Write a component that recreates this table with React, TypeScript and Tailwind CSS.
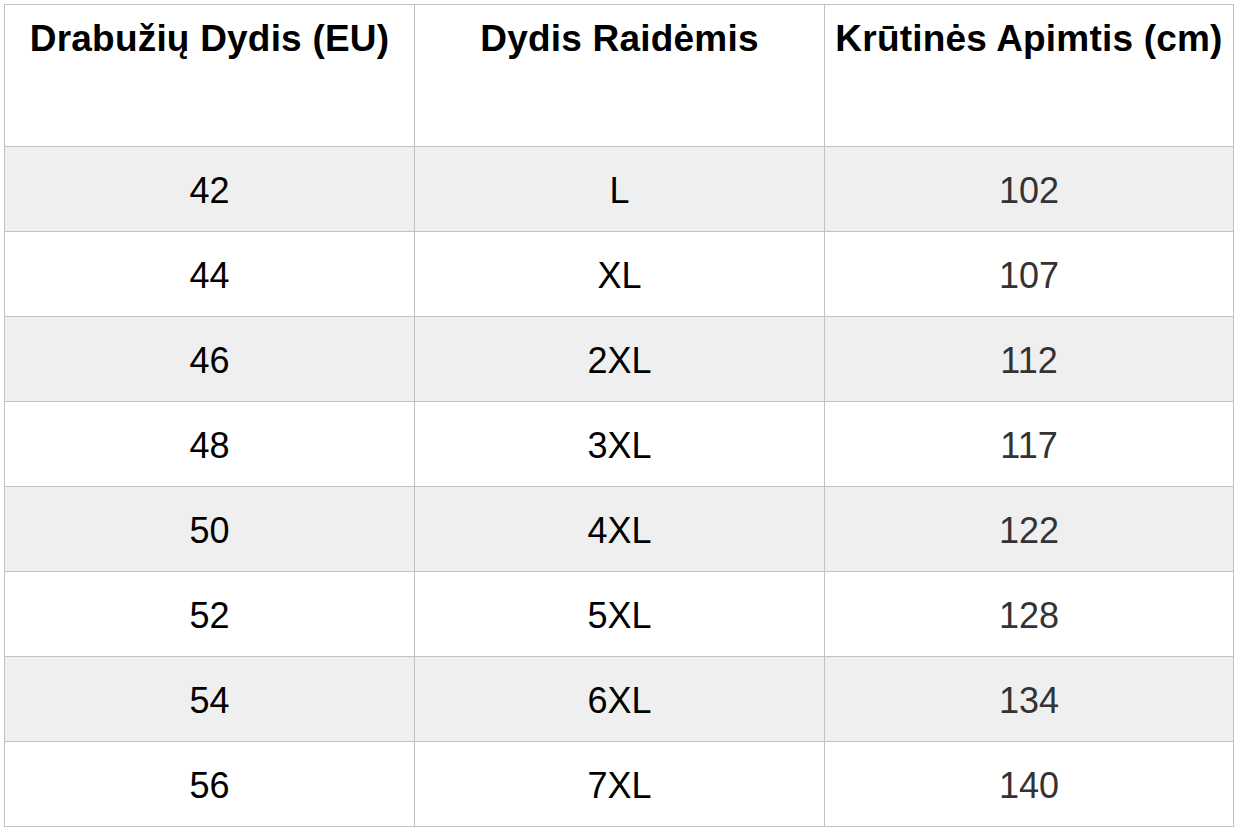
import React from "react";

const rows: [string, string, string][] = [
  ["42", "L", "102"],
  ["44", "XL", "107"],
  ["46", "2XL", "112"],
  ["48", "3XL", "117"],
  ["50", "4XL", "122"],
  ["52", "5XL", "128"],
  ["54", "6XL", "134"],
  ["56", "7XL", "140"],
];

const headers = ["Drabužių Dydis (EU)", "Dydis Raidėmis", "Krūtinės Apimtis (cm)"];

export default function App() {
  return (
    <div
      className="w-[1238px] h-[832px] bg-white pl-[4px] pt-[4px]"
      style={{ fontFamily: '"Liberation Sans", Arial, Helvetica, sans-serif' }}
    >
      <div className="grid grid-cols-[410px_410px_409px] w-[1230px] border-l border-t border-[#c2c2c2]">
        {headers.map((h) => (
          <div
            key={h}
            className="h-[142px] border-r border-b border-[#c2c2c2] pt-[13px] text-center text-[37px] leading-[42px] font-bold text-black whitespace-nowrap tracking-[0.2px]"
          >
            {h}
          </div>
        ))}
        {rows.map((r, i) => (
          <React.Fragment key={r[0]}>
            {r.map((c, j) => (
              <div
                key={j}
                className={`h-[85px] border-r border-b border-[#c2c2c2] flex items-center justify-center pt-[3px] text-[36px] leading-none ${
                  i % 2 === 0 ? "bg-[#efefef]" : "bg-white"
                } ${j === 2 ? "text-[#333333]" : "text-black"}`}
              >
                {c}
              </div>
            ))}
          </React.Fragment>
        ))}
      </div>
    </div>
  );
}
